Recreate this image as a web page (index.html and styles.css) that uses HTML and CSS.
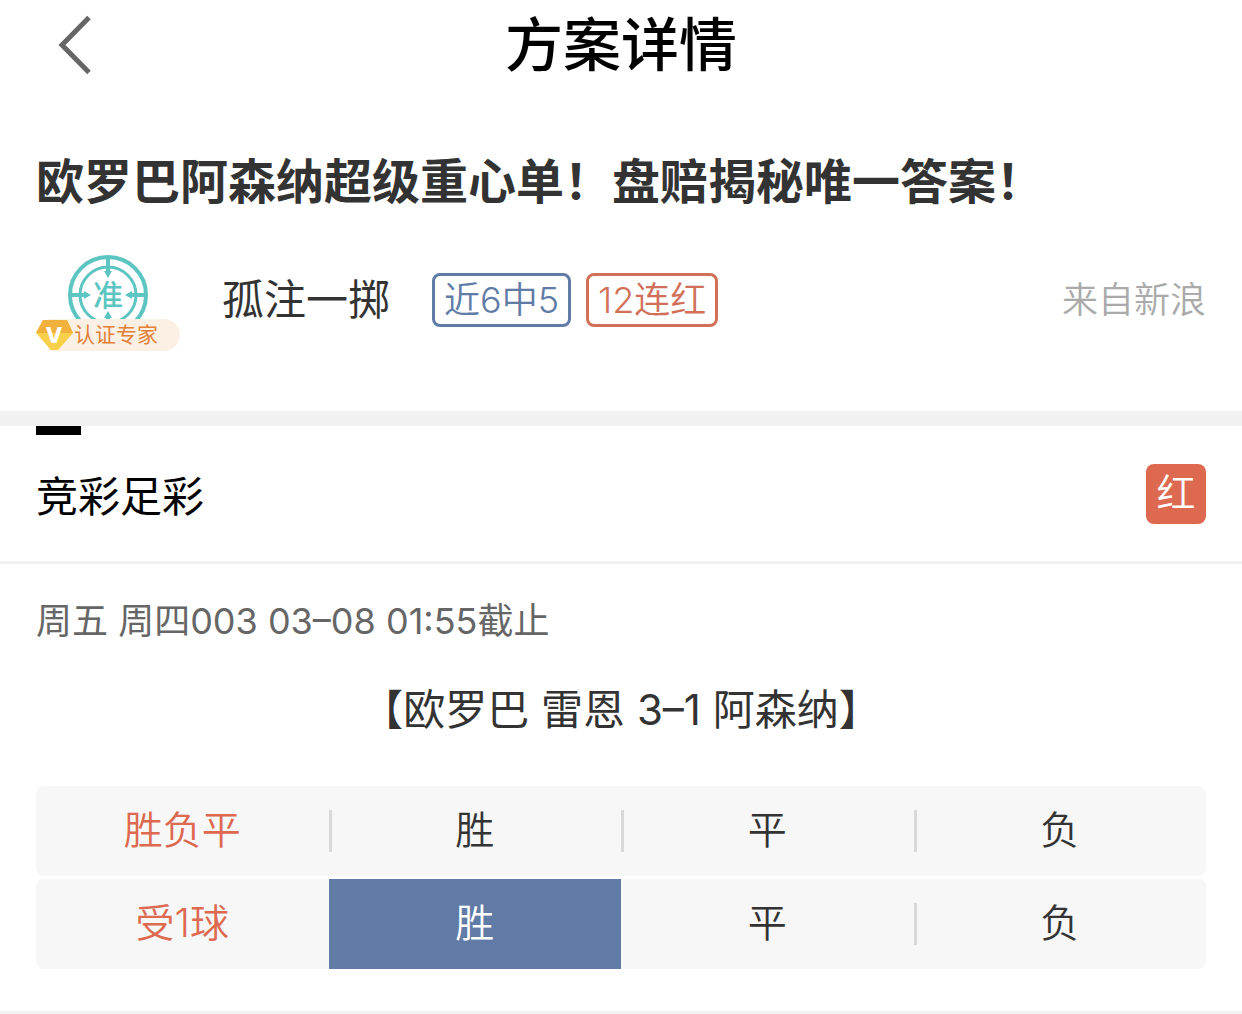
FILE: index.html
```html
<!DOCTYPE html>
<html lang="zh-CN">
<head>
  <meta charset="UTF-8" />
  <meta name="viewport" content="width=device-width, initial-scale=1.0"/>
  <title>方案详情</title>
  <link rel="stylesheet" href="styles.css">
</head>
<body>
  <header class="navbar">
    <button class="back" type="button" aria-label="返回">
      <svg width="36" height="60" viewBox="0 0 36 60" fill="none" stroke="#666" stroke-width="5">
        <path d="M33 2.500L6 30L33 57.500" />
      </svg>
    </button>
    <h1>方案详情</h1>
  </header>

  <section class="intro">
    <h2>欧罗巴阿森纳超级重心单！盘赔揭秘唯一答案！</h2>
    <div class="author">
      <div class="avatar">
        <svg class="target" width="84" height="84" viewBox="0 0 84 84">
          <g fill="none" stroke="#5cc5c1">
            <circle cx="42" cy="42" r="38" stroke-width="4" />
            <circle cx="42" cy="42" r="28" stroke-width="3" />
            <path d="M42 4v17M42 80V63M4 42h17M80 42H63" stroke-width="4" />
          </g>
          <path d="M38 18h8l-4 7zM38 65h8l-4-7zM18 38v8l7-4zM66 38v8l-7-4z" fill="#5cc5c1" />
          <text class="target-text" x="42" y="53" text-anchor="middle">准</text>
        </svg>
        <div class="expert">
          <svg width="38" height="32" viewBox="0 0 38 32">
            <path d="M7 1H31L37 14L22 31H15L0 14z" fill="#f7cf48" />
            <path d="M7 1H31L37 14H0z" fill="#f2b13c" />
            <text class="v-text" x="18" y="24" text-anchor="middle">V</text>
          </svg>
          <span>认证专家</span>
        </div>
      </div>
      <div class="author-info">
        <span class="name">孤注一掷</span>
        <span class="tag tag-blue">近6中5</span>
        <span class="tag tag-red">12连红</span>
        <span class="source">来自新浪</span>
      </div>
    </div>
  </section>

  <section class="plan">
    <div class="plan-head">
      <h3>竞彩足彩</h3>
      <span class="hit">红</span>
    </div>
    <div class="plan-body">
      <p class="deadline">周五 周四003 03–08 01:55截止</p>
      <p class="match">【欧罗巴 雷恩 3–1 阿森纳】</p>
      <table class="odds">
        <tr>
          <th scope="row">胜负平</th>
          <td class="line">胜</td>
          <td class="line">平</td>
          <td class="line">负</td>
        </tr>
        <tr>
          <th scope="row">受1球</th>
          <td class="active">胜</td>
          <td>平</td>
          <td class="line">负</td>
        </tr>
      </table>
    </div>
  </section>
</body>
</html>
```
FILE: styles.css
```css
* {
  box-sizing: border-box;
}

body {
  margin: 0;
  background: #fff;
  color: #333;
  font-family: Inter, "Noto Sans CJK SC", sans-serif;
  font-size: 36px;
}

h1, h2, h3, p {
  margin: 0;
}

.navbar {
  display: grid;
  grid-template-columns: 96px 1fr 96px;
  align-items: center;
  height: 90px;
}

.back {
  display: flex;
  justify-content: flex-end;
  padding: 0 4px 0 0;
  border: 0;
  background: none;
  cursor: pointer;
}

.navbar h1 {
  color: #000;
  font-size: 58px;
  font-weight: 500;
  line-height: 90px;
  text-align: center;
}

.intro {
  padding: 56px 36px 60px;
  border-bottom: 15px solid #f1f1f1;
}

.intro h2 {
  font-size: 48px;
  font-weight: 600;
  line-height: 72px;
}

.author {
  display: flex;
  margin-top: 33px;
}

.avatar {
  position: relative;
  width: 144px;
  height: 100px;
  margin-right: 42px;
}

.target {
  display: block;
  margin: 2px auto 0;
}

.target-text {
  fill: #5cc5c1;
  font-size: 30px;
  font-weight: 500;
}

/* badge lies over the lower part of the avatar */
.expert {
  position: absolute;
  left: 0;
  bottom: 0;
  display: flex;
  align-items: center;
  width: 144px;
  height: 32px;
  border-radius: 16px;
  background: linear-gradient(90deg, transparent 12px, #fcf0e4 12px);
  color: #e27f38;
  font-size: 21px;
  line-height: 30px;
}

.v-text {
  fill: #fff;
  font-size: 22px;
  font-weight: 800;
}

.author-info {
  flex: 1;
  display: flex;
  align-items: center;
  height: 98px;
  line-height: 54px;
}

.name {
  font-size: 42px;
}

.tag {
  height: 54px;
  margin-left: 15px;
  padding: 0 9px;
  border: 3px solid;
  border-radius: 8px;
  font-weight: 350;
  line-height: 48px;
}

.tag-blue {
  margin-left: 42px;
  color: #607ba6;
}

.tag-red {
  color: #d17059;
}

.source {
  margin-left: auto;
  color: #aaa;
  font-weight: 350;
}

.plan {
  border-bottom: 3px solid #f1f1f1;
}

.plan-head {
  display: flex;
  align-items: center;
  justify-content: space-between;
  height: 138px;
  padding: 0 36px;
  border-bottom: 3px solid #f1f1f1;
  background: linear-gradient(#000, #000) 36px 0 / 45px 9px no-repeat;
}

.plan-head h3 {
  color: #000;
  font-size: 42px;
  font-weight: 400;
}

.hit {
  width: 60px;
  height: 60px;
  border-radius: 8px;
  background: #dc6950;
  color: #fff;
  font-size: 39px;
  font-weight: 350;
  line-height: 58px;
  text-align: center;
}

.plan-body {
  padding: 30px 36px 42px;
}

.deadline {
  color: #666;
  line-height: 54px;
}

.match {
  margin: 30px 0 45px;
  font-size: 42px;
  line-height: 63px;
  text-align: center;
}

.odds {
  width: 100%;
  border-collapse: separate;
  border-spacing: 0;
  table-layout: fixed;
  font-size: 39px;
  line-height: 88px;
  text-align: center;
}

.odds th,
.odds td {
  height: 90px;
  padding: 0 0 2px;
  background-color: #f7f7f7;
  font-weight: 350;
}

.odds tr + tr th,
.odds tr + tr td {
  height: 93px;
  border-top: 3px solid #fff;
}

.odds th {
  border-radius: 8px 0 0 8px;
  color: #dc6950;
}

.odds td:last-child {
  border-radius: 0 8px 8px 0;
}

.odds .line {
  background-image: linear-gradient(#d9d9d9, #d9d9d9);
  background-position: left center;
  background-size: 3px 42px;
  background-repeat: no-repeat;
}

.odds .active {
  background-color: #607ba6;
  color: #fff;
}
```
